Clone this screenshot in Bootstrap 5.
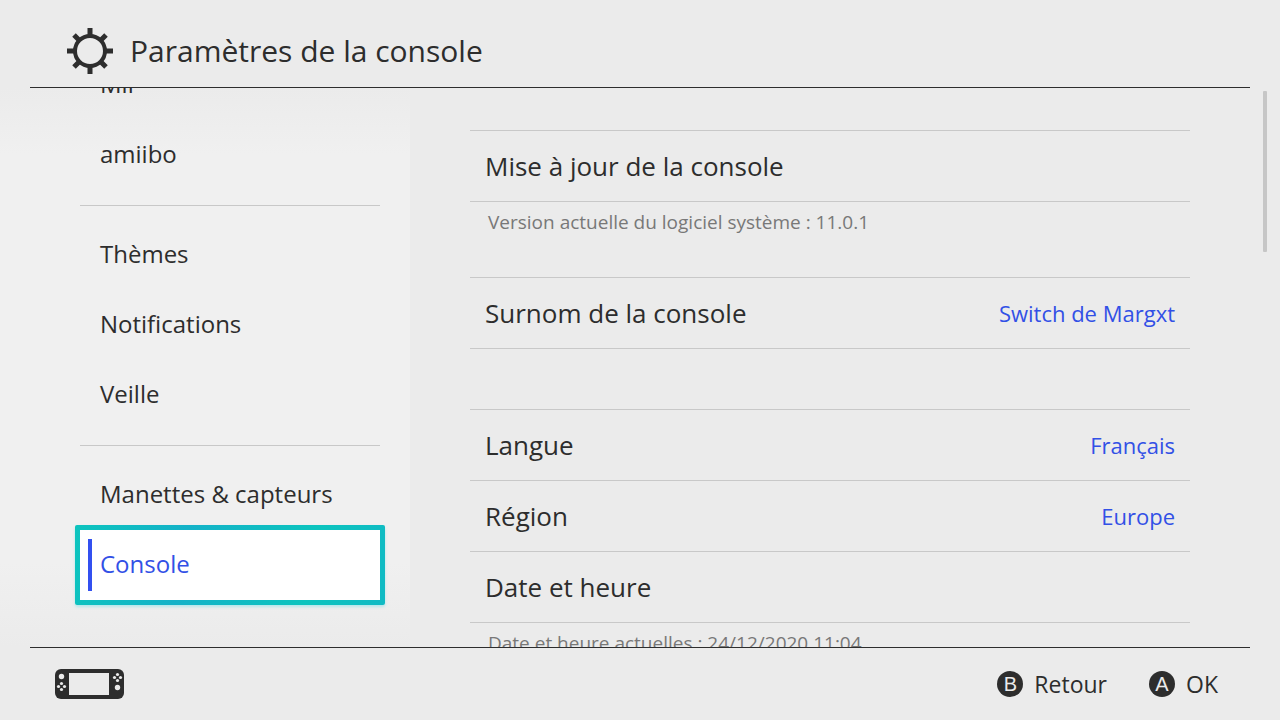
<!DOCTYPE html>
<html lang="fr">
<head>
<meta charset="utf-8">
<meta name="viewport" content="width=device-width, initial-scale=1">
<title>Paramètres de la console</title>
<link href="https://cdn.jsdelivr.net/npm/bootstrap@5.3.0/dist/css/bootstrap.min.css" rel="stylesheet">
<style>
  body { background: #ebebeb; color: #2d2d2d; font-family: "Open Sans", "Noto Sans", sans-serif; }
  a, a:hover { color: inherit; text-decoration: none; }
  .topbar { height: 88px; margin: 0 30px; padding: 14px 36px 0; border-bottom: 1px solid #2d2d2d; }
  .topbar h1 { font-size: 30px; line-height: 40px; font-weight: 400; }
  .bottombar { height: 73px; margin: 0 30px; padding: 0 32px 0 24px; border-top: 1px solid #2d2d2d; }
  .hints { gap: 42px; }
  .hint { gap: 11px; font-size: 23px; line-height: 32px; border: 0; background: none; padding: 0; color: inherit; }
  .key { width: 26px; height: 26px; background: #2d2d2d; color: #ebebeb; font: 400 20px/26px "Liberation Sans", sans-serif; }
  .sidebar { width: 410px; padding: 0 30px 0 80px; background: linear-gradient(#ebebeb, #f0f0f0 12%, #f0f0f0 85%, #ebebeb); }
  .menu { margin-top: -38px; }
  .menu a { height: 70px; padding: 0 20px 2px; font-size: 24px; }
  .menu hr { margin: 15px 0 14px; border-top: 1px solid #c8c8c8; opacity: 1; }
  .menu a.current {
    position: relative; height: 80px; margin: -5px; color: #3250e6;
    border: 5px solid transparent; border-radius: 2px;
    background: linear-gradient(#fff, #fff) padding-box, linear-gradient(100deg, #0cc4be, #14b2c8 35%, #0cc4be 75%, #10bac4) border-box;
    box-shadow: 0 2px 3px #b4e6ea;
  }
  .menu a.current::before { content: ""; position: absolute; left: 8px; top: 9px; bottom: 9px; width: 4px; background: #3250f0; }
  .panel { padding: 42px 90px 0 60px; }
  .rows { border-top: 1px solid #c8c8c8; }
  .rows.spaced { margin-top: 60px; }
  .rows a { height: 71px; padding: 0 15px; font-size: 26px; border-bottom: 1px solid #c8c8c8; }
  .rows a span + span { font-size: 22px; color: #3250e6; }
  .note { height: 75px; margin: 0; padding: 6px 18px 0; font-size: 19px; line-height: 28px; color: #787878; }
  .scrollmark { right: 13px; top: 3px; width: 4px; height: 161px; background: #c6c6c6; border-radius: 1px; }
</style>
</head>
<body>
<div class="vh-100 d-flex flex-column overflow-hidden">
  <header class="topbar d-flex align-items-center flex-shrink-0">
    <svg width="48" height="48" viewBox="0 0 48 48" fill="none" stroke="#2d2d2d" stroke-width="5" aria-hidden="true">
      <circle cx="24" cy="24" r="15" stroke-width="4"/>
      <path d="M24 1v8M24 39v8M1 24h8M39 24h8M8 8l6 6M34 34l6 6M40 8l-6 6M14 34l-6 6"/>
    </svg>
    <h1 class="mb-0 ms-3">Paramètres de la console</h1>
  </header>

  <main class="d-flex flex-grow-1 overflow-hidden position-relative">
    <nav class="sidebar flex-shrink-0 overflow-hidden" aria-label="Catégories">
      <div class="menu d-flex flex-column">
        <a class="d-flex align-items-center" href="#mii">Mii</a>
        <a class="d-flex align-items-center" href="#amiibo">amiibo</a>
        <hr>
        <a class="d-flex align-items-center" href="#themes">Thèmes</a>
        <a class="d-flex align-items-center" href="#notifications">Notifications</a>
        <a class="d-flex align-items-center" href="#veille">Veille</a>
        <hr>
        <a class="d-flex align-items-center" href="#manettes">Manettes &amp; capteurs</a>
        <a class="d-flex align-items-center current" href="#console" aria-current="page">Console</a>
      </div>
    </nav>
    <section class="panel flex-grow-1 overflow-hidden">
      <div class="rows">
        <a class="d-flex align-items-center justify-content-between" href="#maj"><span>Mise à jour de la console</span></a>
      </div>
      <p class="note">Version actuelle du logiciel système : 11.0.1</p>
      <div class="rows">
        <a class="d-flex align-items-center justify-content-between" href="#surnom"><span>Surnom de la console</span><span>Switch de Margxt</span></a>
      </div>
      <div class="rows spaced">
        <a class="d-flex align-items-center justify-content-between" href="#langue"><span>Langue</span><span>Français</span></a>
        <a class="d-flex align-items-center justify-content-between" href="#region"><span>Région</span><span>Europe</span></a>
        <a class="d-flex align-items-center justify-content-between" href="#date"><span>Date et heure</span></a>
      </div>
      <p class="note">Date et heure actuelles : 24/12/2020 11:04</p>
    </section>
    <div class="scrollmark position-absolute"></div>
  </main>

  <footer class="bottombar d-flex align-items-center justify-content-between flex-shrink-0">
    <svg width="71" height="32" viewBox="0 0 71 32" role="img" aria-label="Console portable">
      <rect x="1" y="1" width="69" height="30" rx="6" fill="#2d2d2d"/>
      <path fill="#ebebeb" d="M15 5h40v22H15z"/>
      <g fill="#ebebeb">
        <circle cx="7.500" cy="8.500" r="2.700"/><circle cx="63.500" cy="19.500" r="2.700"/>
        <circle cx="7.500" cy="15.500" r="1.600"/><circle cx="7.500" cy="21.500" r="1.600"/><circle cx="4.500" cy="18.500" r="1.600"/><circle cx="10.500" cy="18.500" r="1.600"/>
        <circle cx="63.500" cy="6.500" r="1.600"/><circle cx="63.500" cy="12.500" r="1.600"/><circle cx="60.500" cy="9.500" r="1.600"/><circle cx="66.500" cy="9.500" r="1.600"/>
      </g>
    </svg>
    <div class="d-flex hints">
      <button type="button" class="hint d-flex align-items-center"><span class="key rounded-circle text-center">B</span><span>Retour</span></button>
      <button type="button" class="hint d-flex align-items-center"><span class="key rounded-circle text-center">A</span><span>OK</span></button>
    </div>
  </footer>
</div>
<script src="https://cdn.jsdelivr.net/npm/bootstrap@5.3.0/dist/js/bootstrap.bundle.min.js"></script>
</body>
</html>
